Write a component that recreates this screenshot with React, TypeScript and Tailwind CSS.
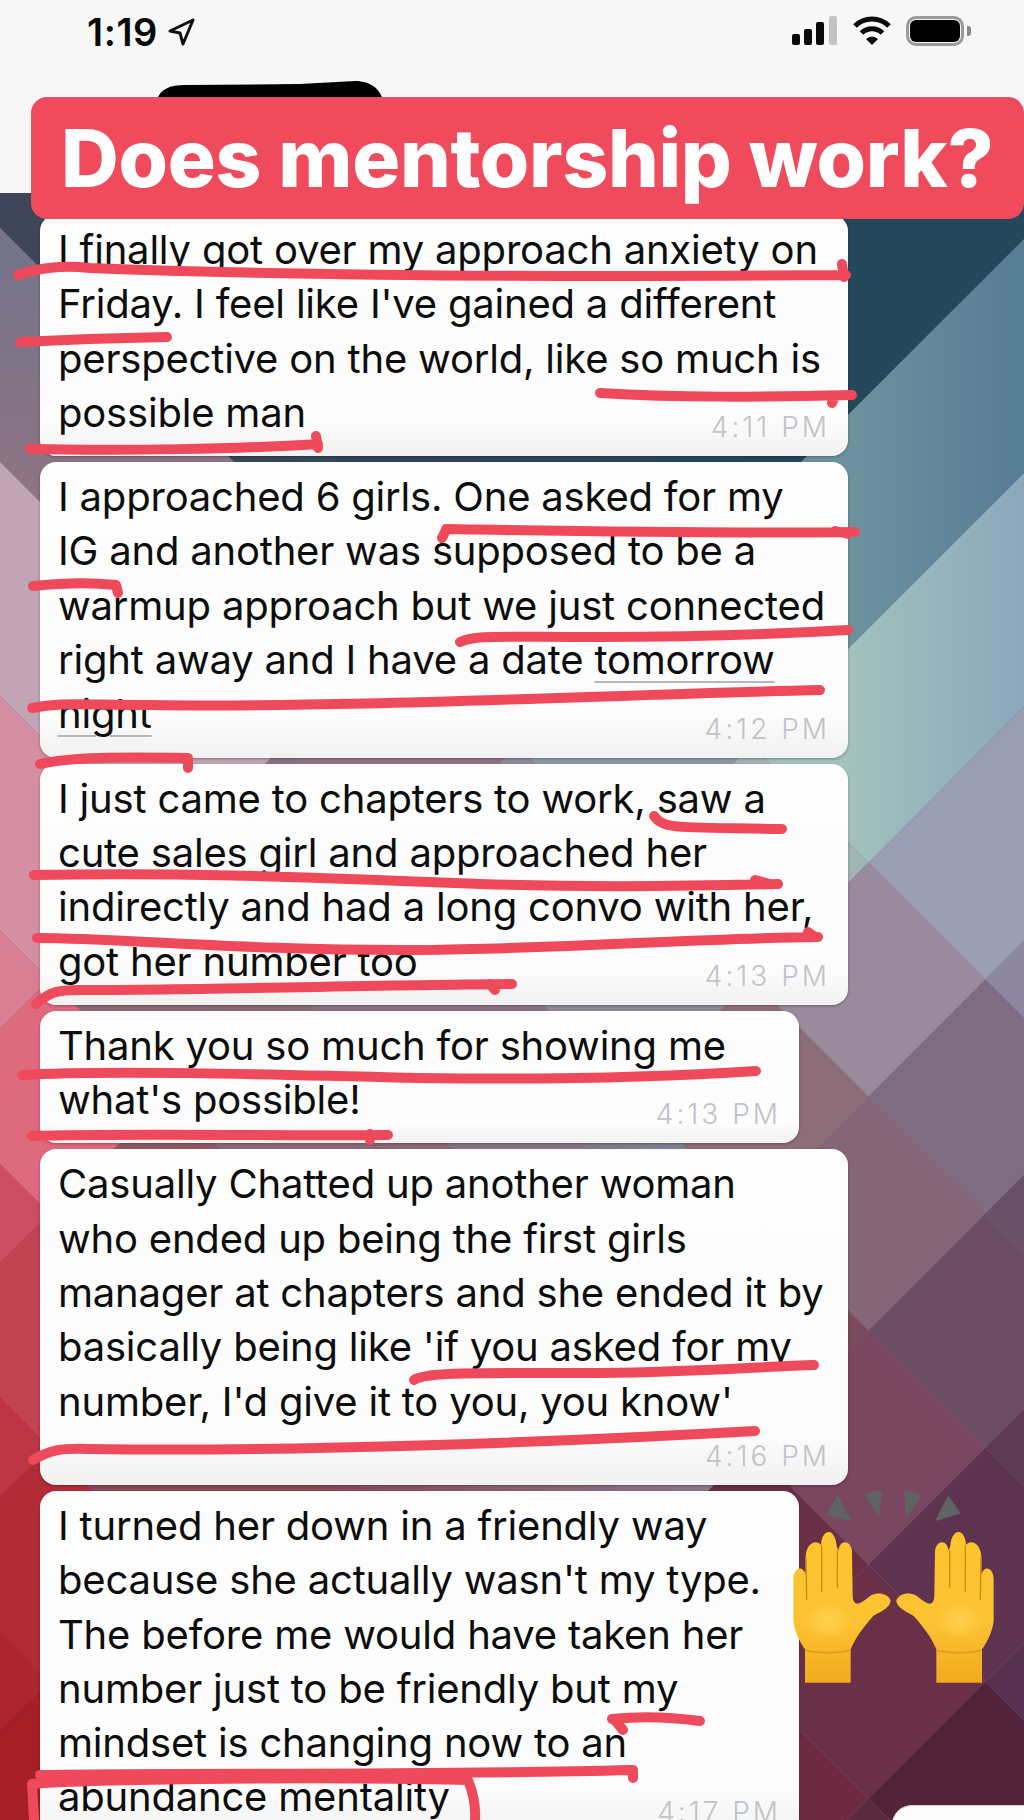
const SANS = "font-['Inter','Liberation_Sans',sans-serif]";

interface BubbleProps {
  lines: React.ReactNode[];
  time: string;
  narrow?: boolean;
  extraLine?: boolean;
}

const Bubble = ({ lines, time, narrow, extraLine }: BubbleProps) => {
  return (
    <div
      className={`relative shrink-0 rounded-[16px] bg-gradient-to-b from-[#fdfdfd] via-[#fcfcfc] via-85% to-[#f1f1f1] pl-[18px] pt-[8px] shadow-[0_1px_3px_rgba(0,0,0,0.3)] ${
        narrow ? "w-[759px]" : "w-[808px]"
      } ${extraLine ? "pb-[56px]" : "pb-[16px]"}`}
    >
      {lines.map((line, i) => (
        <p key={i} className="whitespace-nowrap text-[40px] leading-[54.3px] tracking-[-0.2px] text-[#0d0d0d]">
          {line}
        </p>
      ))}
      <span className="absolute right-[18px] bottom-[12px] text-[28px] font-light leading-[34px] tracking-[3px] text-[#c0c3c7]">{time}</span>
    </div>
  );
};

const S = 234;
const cell = (i: number, j: number, ni = 1, nj = 1) => {
  const c0 = 1263 + S * i;
  const d0 = -6 + S * j;
  const c1 = c0 + S * ni;
  const d1 = d0 + S * nj;
  const pt = (c: number, d: number) => `${(c - d) / 2},${(c + d) / 2}`;
  return [pt(c0, d0), pt(c1, d0), pt(c1, d1), pt(c0, d1)].join(" ");
};

// [i, j, ni, nj, fill] - diamonds of the wallpaper, painted back to front
const tiles: [number, number, number, number, string][] = [
  [-9, -8, 9, 9, "url(#wpTop)"],
  [0, -8, 1, 8, "url(#wpTeal)"],
  [1, -8, 1, 8, "url(#wpLight)"],
  [2, -8, 1, 8, "#9a9eb3"],
  [3, -8, 1, 8, "#8d87a0"],
  [0, 0, 1, 1, "#8d9aa6"],
  [1, 0, 1, 1, "#a2b4b5"],
  [-9, 1, 9, 1, "url(#wpLeft)"],
  [0, 1, 2, 1, "#8f8a98"],
  [-9, 2, 8, 1, "#c2a5b4"],
  [-1, 2, 3, 1, "#8a7483"],
  [-9, 3, 8, 1, "#d68ea2"],
  [-1, 3, 3, 1, "#8c6a78"],
  [-9, 4, 7, 1, "#d97f93"],
  [-2, 4, 1, 1, "#d97f93"],
  [-1, 4, 1, 1, "#de6a7e"],
  [0, 4, 2, 1, "#8f5a68"],
  [-1, 5, 1, 1, "#cc4e60"],
  [0, 5, 1, 1, "#c24352"],
  [1, 5, 2, 1, "#8a4a5a"],
  [0, 6, 1, 1, "#bc3645"],
  [1, 6, 1, 1, "#b22c38"],
  [1, 7, 1, 1, "#ad2630"],
  [2, 7, 1, 2, "#a71f26"],
  [2, 0, 1, 1, "#9a8a9e"],
  [3, 0, 1, 1, "#806c82"],
  [2, 1, 1, 1, "#8d6d78"],
  [3, 1, 1, 1, "#856678"],
  [4, 0, 1, 1, "#6a5167"],
  [4, 1, 1, 1, "#6c4e64"],
  [3, 2, 1, 1, "#7a4a5c"],
  [4, 2, 1, 1, "#7a4660"],
  [5, 1, 1, 1, "#5e3a52"],
  [5, 2, 1, 1, "#5e3350"],
  [4, 3, 1, 1, "#6b2f45"],
  [5, 3, 1, 1, "#6a3047"],
  [6, 2, 1, 1, "#583050"],
  [6, 3, 1, 1, "#52243a"],
  [5, 4, 1, 1, "#6e2a40"],
  [6, 4, 1, 1, "#5a2a3e"],
];

const Wallpaper = () => (
  <svg className="absolute left-0 top-[193px]" width="1024" height="1627" viewBox="0 193 1024 1627">
    <defs>
      <linearGradient id="wpBase" x1="1" y1="0" x2="0" y2="1">
        <stop offset="0" stopColor="#25475c" />
        <stop offset="0.35" stopColor="#6b8a9a" />
        <stop offset="0.55" stopColor="#8a7a8a" />
        <stop offset="0.8" stopColor="#8a3a4a" />
        <stop offset="1" stopColor="#a01f28" />
      </linearGradient>
      <linearGradient id="wpTop" gradientUnits="userSpaceOnUse" x1="0" y1="0" x2="1024" y2="0">
        <stop offset="0" stopColor="#40465a" />
        <stop offset="0.85" stopColor="#24475c" />
      </linearGradient>
      <linearGradient id="wpTeal" gradientUnits="userSpaceOnUse" x1="848" y1="0" x2="1024" y2="0">
        <stop offset="0" stopColor="#6d929f" />
        <stop offset="1" stopColor="#567c96" />
      </linearGradient>
      <linearGradient id="wpLight" gradientUnits="userSpaceOnUse" x1="848" y1="0" x2="1024" y2="0">
        <stop offset="0" stopColor="#a3c1bd" />
        <stop offset="1" stopColor="#8aa8bb" />
      </linearGradient>
      <linearGradient id="wpLeft" gradientUnits="userSpaceOnUse" x1="0" y1="228" x2="0" y2="496">
        <stop offset="0" stopColor="#72748a" />
        <stop offset="1" stopColor="#8f7484" />
      </linearGradient>
    </defs>
    <rect x="0" y="193" width="1024" height="1627" fill="url(#wpBase)" />
    {tiles.map(([i, j, ni, nj, fill], n) => (
      <polygon key={n} points={cell(i, j, ni, nj)} fill={fill} />
    ))}
  </svg>
);

// red marker strokes drawn over the chat, in page coordinates
const scribbles = [
  "M18 275 C40 268 60 265 90 268 C300 276 600 277 846 275 M842 264 L844 277",
  "M20 342 C60 340 120 338 167 337",
  "M600 393 C680 398 760 397 852 395 M835 396 L832 403",
  "M30 449 C120 451 240 449 318 444 M316 436 L318 448",
  "M446 529 C560 531 700 534 855 532 M446 530 L442 538 M835 531 L848 534",
  "M33 586 C60 583 90 582 116 585 L118 593",
  "M460 642 C475 635 490 637 600 637 C700 637 780 634 848 630",
  "M32 708 C60 702 80 705 150 705 C350 708 600 695 820 690",
  "M40 764 C70 757 120 757 188 758 L188 768",
  "M654 816 C664 830 680 827 782 829",
  "M34 875 C200 872 320 878 480 884 C600 888 700 886 778 884 M755 880 L770 884",
  "M37 938 C120 938 250 951 420 950 C560 949 700 938 818 937 M808 932 L815 937",
  "M36 1004 C50 992 56 990 80 990 C200 990 380 985 512 984 M490 984 L495 990",
  "M22 1075 C100 1070 260 1074 420 1078 C560 1080 680 1076 756 1071",
  "M32 1136 C120 1133 260 1136 388 1135 M370 1134 L370 1140",
  "M414 1380 C425 1372 470 1373 600 1373 C700 1372 770 1366 814 1365",
  "M33 1460 C50 1450 60 1448 90 1449 C300 1452 560 1442 755 1431",
  "M612 1719 C640 1716 670 1717 700 1721 M614 1719 L623 1730",
  "M40 1775 C200 1772 400 1776 633 1770 L633 1778",
  "M34 1820 L32 1784 C70 1780 300 1776 468 1780 C472 1790 476 1805 475 1820",
];

const Marks = () => (
  <svg className="pointer-events-none absolute left-0 top-0 z-20" width="1024" height="1820" viewBox="0 0 1024 1820">
    {scribbles.map((d, i) => (
      <path key={i} d={d} fill="none" stroke="#ee4a5c" strokeWidth="10" strokeLinecap="round" strokeLinejoin="round" />
    ))}
  </svg>
);

const Hand = () => (
  <g>
    <path
      d="M135 635 L272 635 L272 535 C285 505 300 480 340 435 C365 420 392 410 392 388 C385 368 355 362 335 372 C320 382 305 398 290 398 C280 395 278 385 278 370 L276 240 C272 205 238 205 235 240 L230 225 C226 170 186 170 183 222 C170 205 140 215 137 255 L137 310 C128 280 100 290 100 325 L100 450 C105 490 125 520 135 535 Z"
      fill="url(#handFill)"
    />
    <path d="M185 225 L185 360 M232 240 L232 348 M138 260 L140 385" stroke="#c98a12" strokeWidth="4" strokeLinecap="round" fill="none" />
    <ellipse cx="205" cy="450" rx="75" ry="60" fill="url(#palmGlow)" />
    <path d="M135 537 C170 548 235 548 272 537" stroke="#e09a18" strokeWidth="5" fill="none" />
  </g>
);

const RaisedHands = () => (
  <svg className="relative z-10 -ml-[9px] shrink-0" width="214" height="200" viewBox="90 60 642 600">
    <defs>
      <linearGradient id="handFill" x1="0" y1="0" x2="0" y2="1">
        <stop offset="0" stopColor="#fcc42c" />
        <stop offset="0.6" stopColor="#fcc233" />
        <stop offset="1" stopColor="#f2a91e" />
      </linearGradient>
      <radialGradient id="palmGlow">
        <stop offset="0" stopColor="#ffd554" stopOpacity="0.8" />
        <stop offset="1" stopColor="#ffd554" stopOpacity="0" />
      </radialGradient>
    </defs>
    <g fill="#606364" stroke="#606364" strokeWidth="8" strokeLinejoin="round">
      <polygon points="205,130 232,80 268,145" />
      <polygon points="320,72 362,60 355,130" />
      <polygon points="437,60 480,75 440,130" />
      <polygon points="532,145 565,80 596,125" />
    </g>
    <Hand />
    <g transform="translate(801 0) scale(-1 1)">
      <Hand />
    </g>
  </svg>
);

const StatusBar = () => (
  <div className="flex h-[97px] items-start justify-between pl-[87px] pr-[53px] pt-[10px]">
    <div className="flex items-center gap-[10px]">
      <span className="text-[38px] font-semibold leading-[44px] tracking-[0.6px] text-[#0a0a0a]">1:19</span>
      <svg width="28" height="28" viewBox="0 0 28 28">
        <path d="M25 2 L2 13 L12 15 L15 26 Z" fill="none" stroke="#111" strokeWidth="3" strokeLinejoin="round" />
      </svg>
    </div>
    <div className="flex items-center gap-[15px] pt-[6px]">
      <svg width="46" height="30" viewBox="0 0 46 30">
        <rect x="0" y="18" width="8" height="11" rx="2" fill="#0a0a0a" />
        <rect x="12" y="13" width="8" height="16" rx="2" fill="#0a0a0a" />
        <rect x="24" y="6" width="8" height="23" rx="2" fill="#0a0a0a" />
        <rect x="37" y="0" width="8" height="29" rx="2" fill="#c4c4c4" />
      </svg>
      <svg width="38" height="30" viewBox="0 0 38 30">
        <path d="M2 10 A24 24 0 0 1 36 10" fill="none" stroke="#0a0a0a" strokeWidth="5" />
        <path d="M8.5 17 A15 15 0 0 1 29.5 17" fill="none" stroke="#0a0a0a" strokeWidth="5" />
        <path d="M13 23 Q19 18 25 23 L19 29 Z" fill="#0a0a0a" />
      </svg>
      <div className="flex items-center gap-[3px]">
        <div className="flex h-[30px] w-[58px] items-center justify-center rounded-[10px] border-[3px] border-[#9a9a9a]">
          <div className="h-[22px] w-[50px] rounded-[6px] bg-black" />
        </div>
        <div className="h-[10px] w-[4px] rounded-r-[3px] bg-[#888]" />
      </div>
    </div>
  </div>
);

const linkClass = "underline decoration-[#b4b6bb] decoration-2 underline-offset-[7px]";

export default function App() {
  return (
    <div className={`relative h-[1820px] w-[1024px] overflow-hidden bg-[#f7f7f7] ${SANS}`}>
      <Wallpaper />
      <svg className="absolute left-0 top-0" width="1024" height="100" viewBox="0 0 1024 100">
        <path d="M157 100 C160 89 170 85 185 85 L300 84 L355 81 C372 81 380 90 383 100 Z" fill="#000" />
      </svg>
      <StatusBar />
      <div className="relative z-10 ml-[31px] flex h-[122px] w-[993px] items-center rounded-[16px] bg-[#ef4b5c] pl-[30px]">
        <h1 className="whitespace-nowrap text-[80px] font-extrabold leading-none tracking-[-0.3px] text-white">Does mentorship work?</h1>
      </div>
      <div className="relative -mt-[4px] flex flex-col gap-[6px] pl-[40px]">
        <Bubble
          time="4:11 PM"
          lines={[
            "I finally got over my approach anxiety on",
            "Friday. I feel like I've gained a different",
            "perspective on the world, like so much is",
            "possible man",
          ]}
        />
        <Bubble
          time="4:12 PM"
          lines={[
            "I approached 6 girls. One asked for my",
            "IG and another was supposed to be a",
            "warmup approach but we just connected",
            <>
              right away and I have a date <span className={linkClass}>tomorrow</span>
            </>,
            <span className={linkClass}>night</span>,
          ]}
        />
        <Bubble
          time="4:13 PM"
          lines={[
            "I just came to chapters to work, saw a",
            "cute sales girl and approached her",
            "indirectly and had a long convo with her,",
            "got her number too",
          ]}
        />
        <Bubble narrow time="4:13 PM" lines={["Thank you so much for showing me", "what's possible!"]} />
        <Bubble
          extraLine
          time="4:16 PM"
          lines={[
            "Casually Chatted up another woman",
            "who ended up being the first girls",
            "manager at chapters and she ended it by",
            "basically being like 'if you asked for my",
            "number, I'd give it to you, you know'",
          ]}
        />
        <div className="flex items-start">
          <Bubble
            narrow
            time="4:17 PM"
            lines={[
              "I turned her down in a friendly way",
              "because she actually wasn't my type.",
              "The before me would have taken her",
              "number just to be friendly but my",
              "mindset is changing now to an",
              "abundance mentality",
            ]}
          />
          <RaisedHands />
        </div>
      </div>
      <div className="absolute left-[892px] top-[1805px] h-[40px] w-[160px] rounded-[20px] border-t border-[#cfcfcf] bg-[#fbfbfb]" />
      <Marks />
    </div>
  );
}
